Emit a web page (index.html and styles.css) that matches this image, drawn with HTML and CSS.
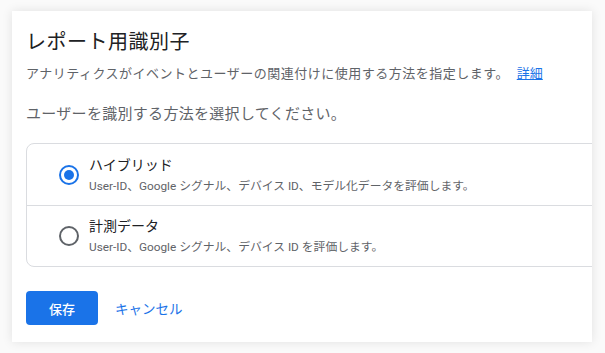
FILE: index.html
```html
<!DOCTYPE html>
<html lang="ja">
<head>
  <meta charset="UTF-8">
  <meta name="viewport" content="width=device-width, initial-scale=1.0">
  <title>レポート用識別子</title>
  <link rel="stylesheet" href="styles.css">
</head>
<body>
  <div class="identity-card">
    <h1 class="identity-title">レポート用識別子</h1>
    <p class="identity-subtitle">
      アナリティクスがイベントとユーザーの関連付けに使用する方法を指定します。
      <a href="#" class="link">詳細</a>
    </p>

    <p class="identity-question">ユーザーを識別する方法を選択してください。</p>

    <div class="options-list">
      <label class="option-row">
        <span class="radio checked"></span>
        <span class="option-text">
          <span class="option-label">ハイブリッド</span>
          <span class="option-desc">User-ID、Google シグナル、デバイス ID、モデル化データを評価します。</span>
        </span>
      </label>

      <label class="option-row">
        <span class="radio"></span>
        <span class="option-text">
          <span class="option-label">計測データ</span>
          <span class="option-desc">User-ID、Google シグナル、デバイス ID を評価します。</span>
        </span>
      </label>
    </div>

    <div class="identity-actions">
      <button class="btn btn-primary">保存</button>
      <button class="btn btn-text">キャンセル</button>
    </div>
  </div>
</body>
</html>
```

FILE: styles.css
```css
:root {
  --blue: #1a73e8;
  --text-primary: #202124;
  --text-secondary: #5f6368;
  --border: #dadce0;
}

* {
  margin: 0;
  padding: 0;
  box-sizing: border-box;
}

body {
  font-family: Roboto, "Noto Sans CJK JP", sans-serif;
  background: #fafafa;
  color: var(--text-primary);
  padding: 11px 13px 11px 12px;
}

.identity-card {
  background: #fff;
  box-shadow: 0 0 10px rgba(0, 0, 0, 0.1);
  padding: 17px 0 17px 14px;
  overflow: hidden;
  height: 331px;
}

.identity-title {
  font-size: 20px;
  font-weight: 400;
  letter-spacing: 0.5px;
  line-height: 28px;
  margin-bottom: 8px;
}

.identity-subtitle {
  font-size: 13px;
  letter-spacing: 0.5px;
  line-height: 20px;
  color: var(--text-secondary);
  margin-bottom: 18px;
}

.link {
  color: var(--blue);
  margin-left: 4px;
  letter-spacing: 0;
}

.identity-question {
  font-size: 15px;
  letter-spacing: 0.3px;
  line-height: 24px;
  color: var(--text-secondary);
  margin-bottom: 17px;
}

.options-list {
  width: 600px;
  border: 1px solid var(--border);
  border-radius: 8px;
}

.option-row {
  display: flex;
  align-items: center;
  gap: 10px;
  height: 61px;
  padding: 0 0 0 32px;
}

.option-row + .option-row {
  border-top: 1px solid var(--border);
}

.radio {
  width: 20px;
  height: 20px;
  border: 2px solid #5f6368;
  border-radius: 50%;
  display: flex;
  align-items: center;
  justify-content: center;
  flex-shrink: 0;
}

.radio.checked {
  border-color: var(--blue);
}

.radio.checked::after {
  content: "";
  width: 10px;
  height: 10px;
  border-radius: 50%;
  background: var(--blue);
}

.option-text {
  display: flex;
  flex-direction: column;
  gap: 2px;
}

.option-label {
  font-size: 14px;
  line-height: 20px;
  color: var(--text-primary);
}

.option-desc {
  font-size: 11.8px;
  line-height: 18px;
  color: var(--text-secondary);
}

.identity-actions {
  display: flex;
  align-items: center;
  gap: 8px;
  margin-top: 24px;
}

.btn {
  font-family: inherit;
  font-size: 13px;
  border: none;
  background: none;
  cursor: pointer;
  height: 34px;
}

.btn-primary {
  width: 72px;
  background: var(--blue);
  color: #fff;
  border-radius: 4px;
  font-weight: 500;
}

.btn-text {
  color: var(--blue);
  font-size: 13.5px;
  padding: 0 9px;
}
```
